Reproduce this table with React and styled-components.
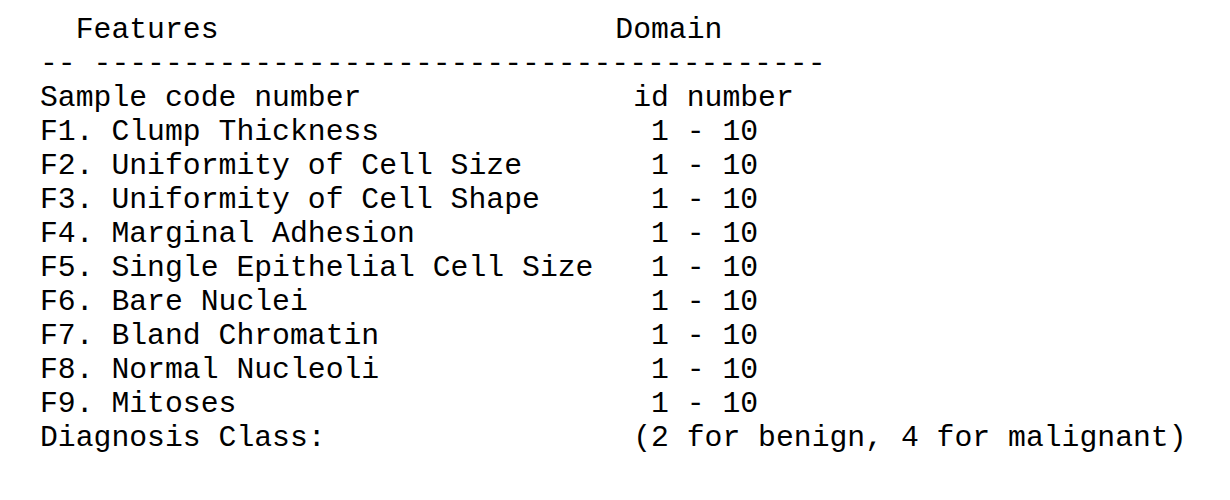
import React from "react";
import styled, { createGlobalStyle } from "styled-components";

const Global = createGlobalStyle`
  html, body { margin: 0; padding: 0; background: #ffffff; }
`;

const Listing = styled.div`
  padding: 13px 0 0 40px;
  font-family: "Liberation Mono", "Courier New", monospace;
  font-size: 29.75px;
  line-height: 34px;
  color: #000000;
  white-space: pre;
`;

const Row = styled.div`
  display: grid;
  grid-template-columns: calc(32ch + 4px) auto;
  height: 34px;
`;

const Feature = styled.span`
  padding-left: ${(p) => p.$indent || 0}ch;
`;

const Domain = styled.span`
  padding-left: ${(p) => p.$indent || 0}ch;
`;

const Rule = styled.div`
  height: 34px;
`;

const rows = [
  ["Sample code number", "id number", 1],
  ["F1. Clump Thickness", "1 - 10", 2],
  ["F2. Uniformity of Cell Size", "1 - 10", 2],
  ["F3. Uniformity of Cell Shape", "1 - 10", 2],
  ["F4. Marginal Adhesion", "1 - 10", 2],
  ["F5. Single Epithelial Cell Size", "1 - 10", 2],
  ["F6. Bare Nuclei", "1 - 10", 2],
  ["F7. Bland Chromatin", "1 - 10", 2],
  ["F8. Normal Nucleoli", "1 - 10", 2],
  ["F9. Mitoses", "1 - 10", 2],
  ["Diagnosis Class:", "(2 for benign, 4 for malignant)", 1],
];

export default function App() {
  return (
    <>
      <Global />
      <Listing>
        <Row>
          <Feature $indent={2}>Features</Feature>
          <Domain>Domain</Domain>
        </Row>
        <Rule>{"-- " + "-".repeat(41)}</Rule>
        {rows.map(([f, d, i]) => (
          <Row key={f}>
            <Feature>{f}</Feature>
            <Domain $indent={i}>{d}</Domain>
          </Row>
        ))}
      </Listing>
    </>
  );
}
